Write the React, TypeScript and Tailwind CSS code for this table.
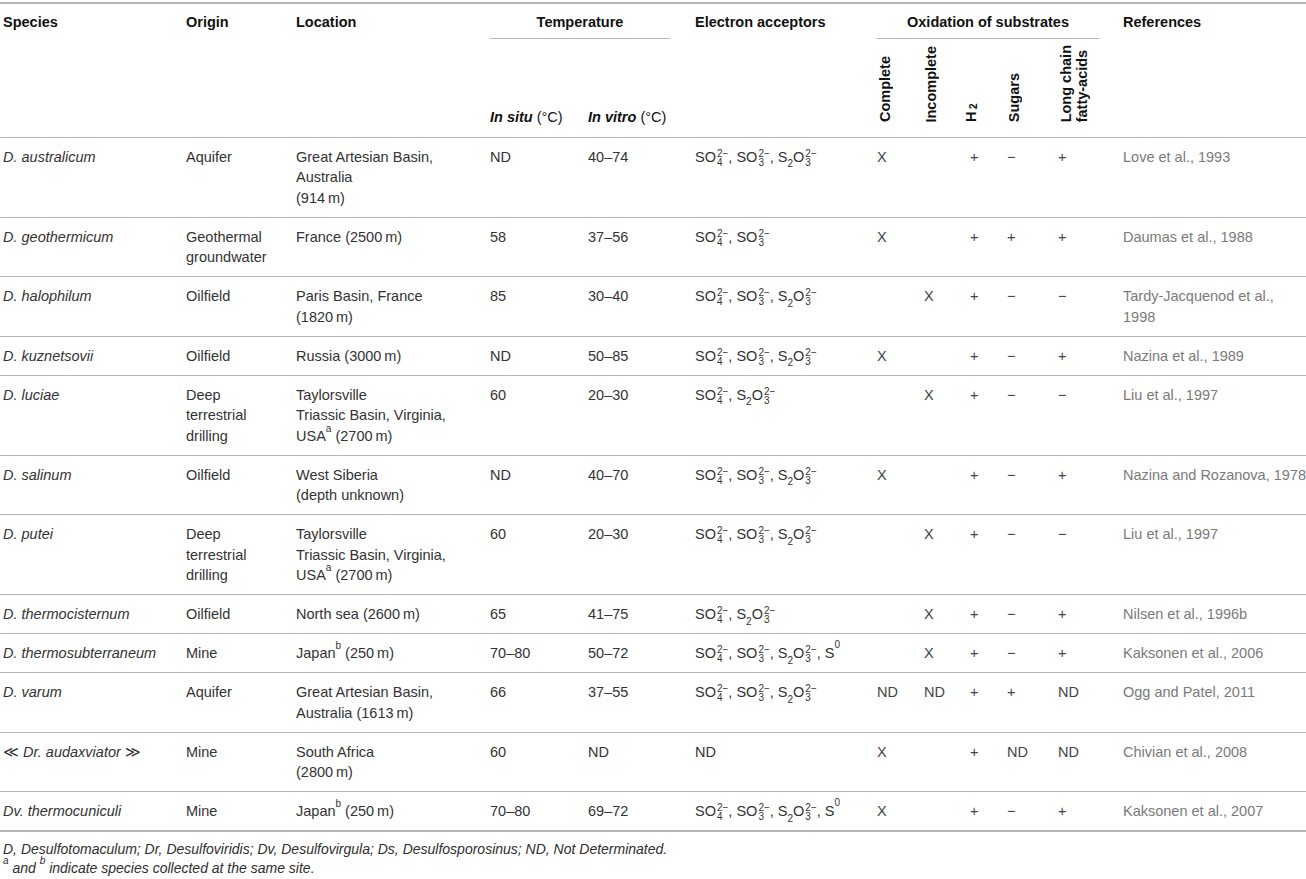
import React from 'react';

type Cell = React.ReactNode;

interface Row {
  species: Cell;
  origin: string[];
  location: Cell[];
  inSitu: string;
  inVitro: string;
  acceptors: Cell;
  complete: string;
  incomplete: string;
  h2: string;
  sugars: string;
  lcfa: string;
  refs: string[];
}

const Scripts = ({ sup, sub }: { sup: string; sub: string }) => (
  <span className="inline-flex flex-col text-[10px] leading-[9px] align-[5px] ml-[1px]">
    <span>{sup}</span>
    <span>{sub}</span>
  </span>
);

const SO4 = () => (
  <span className="whitespace-nowrap">
    SO<Scripts sup="2−" sub="4" />
  </span>
);
const SO3 = () => (
  <span className="whitespace-nowrap">
    SO<Scripts sup="2−" sub="3" />
  </span>
);
const S2O3 = () => (
  <span className="whitespace-nowrap">
    S<sub className="text-[10px] align-[-3px] leading-none">2</sub>O<Scripts sup="2−" sub="3" />
  </span>
);
const S0 = () => (
  <span className="whitespace-nowrap">
    S<sup className="text-[10px] align-[5px] leading-none">0</sup>
  </span>
);

const join = (items: React.ReactNode[]) => (
  <>
    {items.map((it, i) => (
      <React.Fragment key={i}>
        {i > 0 && ', '}
        {it}
      </React.Fragment>
    ))}
  </>
);

const Sup = ({ c }: { c: string }) => <sup className="text-[10px] align-[4px] leading-none">{c}</sup>;

const thin = '\u2009';

const taylorsville = [
  'Taylorsville',
  'Triassic Basin, Virginia,',
  <>
    USA<Sup c="a" /> (2700{thin}m)
  </>,
];

const rows: Row[] = [
  {
    species: 'D. australicum',
    origin: ['Aquifer'],
    location: ['Great Artesian Basin,', 'Australia', `(914${thin}m)`],
    inSitu: 'ND',
    inVitro: '40–74',
    acceptors: join([<SO4 />, <SO3 />, <S2O3 />]),
    complete: 'X',
    incomplete: '',
    h2: '+',
    sugars: '−',
    lcfa: '+',
    refs: ['Love et al., 1993'],
  },
  {
    species: 'D. geothermicum',
    origin: ['Geothermal', 'groundwater'],
    location: [`France (2500${thin}m)`],
    inSitu: '58',
    inVitro: '37–56',
    acceptors: join([<SO4 />, <SO3 />]),
    complete: 'X',
    incomplete: '',
    h2: '+',
    sugars: '+',
    lcfa: '+',
    refs: ['Daumas et al., 1988'],
  },
  {
    species: 'D. halophilum',
    origin: ['Oilfield'],
    location: ['Paris Basin, France', `(1820${thin}m)`],
    inSitu: '85',
    inVitro: '30–40',
    acceptors: join([<SO4 />, <SO3 />, <S2O3 />]),
    complete: '',
    incomplete: 'X',
    h2: '+',
    sugars: '−',
    lcfa: '−',
    refs: ['Tardy-Jacquenod et al.,', '1998'],
  },
  {
    species: 'D. kuznetsovii',
    origin: ['Oilfield'],
    location: [`Russia (3000${thin}m)`],
    inSitu: 'ND',
    inVitro: '50–85',
    acceptors: join([<SO4 />, <SO3 />, <S2O3 />]),
    complete: 'X',
    incomplete: '',
    h2: '+',
    sugars: '−',
    lcfa: '+',
    refs: ['Nazina et al., 1989'],
  },
  {
    species: 'D. luciae',
    origin: ['Deep', 'terrestrial', 'drilling'],
    location: taylorsville,
    inSitu: '60',
    inVitro: '20–30',
    acceptors: join([<SO4 />, <S2O3 />]),
    complete: '',
    incomplete: 'X',
    h2: '+',
    sugars: '−',
    lcfa: '−',
    refs: ['Liu et al., 1997'],
  },
  {
    species: 'D. salinum',
    origin: ['Oilfield'],
    location: ['West Siberia', '(depth unknown)'],
    inSitu: 'ND',
    inVitro: '40–70',
    acceptors: join([<SO4 />, <SO3 />, <S2O3 />]),
    complete: 'X',
    incomplete: '',
    h2: '+',
    sugars: '−',
    lcfa: '+',
    refs: ['Nazina and Rozanova, 1978'],
  },
  {
    species: 'D. putei',
    origin: ['Deep', 'terrestrial', 'drilling'],
    location: taylorsville,
    inSitu: '60',
    inVitro: '20–30',
    acceptors: join([<SO4 />, <SO3 />, <S2O3 />]),
    complete: '',
    incomplete: 'X',
    h2: '+',
    sugars: '−',
    lcfa: '−',
    refs: ['Liu et al., 1997'],
  },
  {
    species: 'D. thermocisternum',
    origin: ['Oilfield'],
    location: [`North sea (2600${thin}m)`],
    inSitu: '65',
    inVitro: '41–75',
    acceptors: join([<SO4 />, <S2O3 />]),
    complete: '',
    incomplete: 'X',
    h2: '+',
    sugars: '−',
    lcfa: '+',
    refs: ['Nilsen et al., 1996b'],
  },
  {
    species: 'D. thermosubterraneum',
    origin: ['Mine'],
    location: [
      <>
        Japan<Sup c="b" /> (250{thin}m)
      </>,
    ],
    inSitu: '70–80',
    inVitro: '50–72',
    acceptors: join([<SO4 />, <SO3 />, <S2O3 />, <S0 />]),
    complete: '',
    incomplete: 'X',
    h2: '+',
    sugars: '−',
    lcfa: '+',
    refs: ['Kaksonen et al., 2006'],
  },
  {
    species: 'D. varum',
    origin: ['Aquifer'],
    location: ['Great Artesian Basin,', `Australia (1613${thin}m)`],
    inSitu: '66',
    inVitro: '37–55',
    acceptors: join([<SO4 />, <SO3 />, <S2O3 />]),
    complete: 'ND',
    incomplete: 'ND',
    h2: '+',
    sugars: '+',
    lcfa: 'ND',
    refs: ['Ogg and Patel, 2011'],
  },
  {
    species: (
      <>
        <span className="not-italic">≪</span> Dr. audaxviator <span className="not-italic">≫</span>
      </>
    ),
    origin: ['Mine'],
    location: ['South Africa', `(2800${thin}m)`],
    inSitu: '60',
    inVitro: 'ND',
    acceptors: 'ND',
    complete: 'X',
    incomplete: '',
    h2: '+',
    sugars: 'ND',
    lcfa: 'ND',
    refs: ['Chivian et al., 2008'],
  },
  {
    species: 'Dv. thermocuniculi',
    origin: ['Mine'],
    location: [
      <>
        Japan<Sup c="b" /> (250{thin}m)
      </>,
    ],
    inSitu: '70–80',
    inVitro: '69–72',
    acceptors: join([<SO4 />, <SO3 />, <S2O3 />, <S0 />]),
    complete: 'X',
    incomplete: '',
    h2: '+',
    sugars: '−',
    lcfa: '+',
    refs: ['Kaksonen et al., 2007'],
  },
];

const Lines = ({ items }: { items: React.ReactNode[] }) => (
  <>
    {items.map((l, i) => (
      <div key={i} className="whitespace-nowrap">
        {l}
      </div>
    ))}
  </>
);

const Vertical = ({ children }: { children: React.ReactNode }) => (
  <div className="[writing-mode:vertical-rl] rotate-180 font-bold text-[14.5px] leading-[16px] text-[#111] whitespace-nowrap">
    {children}
  </div>
);

const td = 'align-top pl-[3px] pt-[9px] pb-[8.5px]';
const sym = 'align-top pl-[3px] pt-[9px] pb-[8.5px] text-[#444]';

export default function App() {
  return (
    <div className="w-[1306px] h-[879px] bg-white overflow-hidden font-['Liberation_Sans',Arial,sans-serif] text-[14.5px] leading-[20.5px] text-[#333]">
      <div className="h-[2px]" />
      <table className="table-fixed border-collapse w-[1306px]">
        <colgroup>
          <col className="w-[183px]" />
          <col className="w-[110px]" />
          <col className="w-[194px]" />
          <col className="w-[98px]" />
          <col className="w-[107px]" />
          <col className="w-[182px]" />
          <col className="w-[47px]" />
          <col className="w-[46px]" />
          <col className="w-[37px]" />
          <col className="w-[51px]" />
          <col className="w-[65px]" />
          <col className="w-[186px]" />
        </colgroup>
        <thead className="font-bold text-[#111] leading-[20px]">
          <tr className="border-t-2 border-[#b5b5b5]">
            <th rowSpan={2} className="align-top text-left pl-[3px] pt-[8px] font-bold">
              Species
            </th>
            <th rowSpan={2} className="align-top text-left pl-[3px] pt-[8px] font-bold">
              Origin
            </th>
            <th rowSpan={2} className="align-top text-left pl-[3px] pt-[8px] font-bold">
              Location
            </th>
            <th colSpan={2} className="align-top pt-[8px] h-[35px] font-bold">
              <div className="ml-[3px] w-[180px] border-b-[1.5px] border-[#b5b5b5] pb-[6px] text-center">
                Temperature
              </div>
            </th>
            <th rowSpan={2} className="align-top text-left pl-[3px] pt-[8px] font-bold">
              Electron acceptors
            </th>
            <th colSpan={5} className="align-top pt-[8px] font-bold">
              <div className="ml-[3px] w-[222px] border-b-[1.5px] border-[#b5b5b5] pb-[6px] text-center">
                Oxidation of substrates
              </div>
            </th>
            <th rowSpan={2} className="align-top text-left pl-[3px] pt-[8px] font-bold">
              References
            </th>
          </tr>
          <tr className="h-[98px]">
            <th className="align-bottom text-left pl-[3px] pb-[10px] font-bold whitespace-nowrap">
              <i>In situ</i> <span className="font-normal">(°C)</span>
            </th>
            <th className="align-bottom text-left pl-[3px] pb-[10px] font-bold whitespace-nowrap">
              <i>In vitro</i> <span className="font-normal">(°C)</span>
            </th>
            <th className="align-bottom text-left pl-[3px] pb-[14px]">
              <Vertical>Complete</Vertical>
            </th>
            <th className="align-bottom text-left pl-[2px] pb-[14px]">
              <Vertical>Incomplete</Vertical>
            </th>
            <th className="align-bottom text-left pb-[14px]">
              <div className="-ml-[4px]">
                <Vertical>
                  H<sub className="text-[10px] align-[-3px] leading-none">2</sub>
                </Vertical>
              </div>
            </th>
            <th className="align-bottom text-left pl-[2px] pb-[14px]">
              <Vertical>Sugars</Vertical>
            </th>
            <th className="align-bottom text-left pl-[3px] pb-[14px]">
              <Vertical>
                Long chain
                <br />
                fatty-acids
              </Vertical>
            </th>
          </tr>
        </thead>
        <tbody>
          {rows.map((r, i) => (
            <tr key={i} className={`border-t-[1.5px] border-[#b5b5b5] ${i === rows.length - 1 ? 'border-b-2' : ''}`}>
              <td className={`${td} italic whitespace-nowrap`}>{r.species}</td>
              <td className={td}>
                <Lines items={r.origin} />
              </td>
              <td className={td}>
                <Lines items={r.location} />
              </td>
              <td className={td}>{r.inSitu}</td>
              <td className={td}>{r.inVitro}</td>
              <td className={`${td} whitespace-nowrap`}>{r.acceptors}</td>
              <td className={sym}>{r.complete}</td>
              <td className={sym}>{r.incomplete}</td>
              <td className={sym}>{r.h2}</td>
              <td className={sym}>{r.sugars}</td>
              <td className={sym}>{r.lcfa}</td>
              <td className={`${td} text-[#7a7a7a]`}>
                <Lines items={r.refs} />
              </td>
            </tr>
          ))}
        </tbody>
      </table>
      <div className="pl-[3px] pt-[8px] italic text-[14px] leading-[19px] text-[#2e2e2e]">
        <div>
          D, Desulfotomaculum; Dr, Desulfoviridis; Dv, Desulfovirgula; Ds, Desulfosporosinus; ND, Not Determinated.
        </div>
        <div>
          <Sup c="a" /> and <Sup c="b" /> indicate species collected at the same site.
        </div>
      </div>
    </div>
  );
}
